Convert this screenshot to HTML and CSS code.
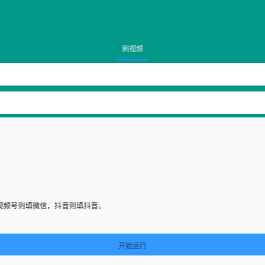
FILE: index.html
```html
<!DOCTYPE html>
<html>
  <head>
    <meta charset="utf-8">
    <meta name="viewport" content="width=device-width, initial-scale=1">
    <title>刷视频</title>
    <link rel="stylesheet" href="styles.css">
  </head>
  <body>
    <header class="topbar">
      <div class="tab active">刷视频</div>
    </header>

    <form class="fields">
      <div class="field"></div>
      <div class="rule thick"></div>
      <div class="field"></div>
      <div class="rule thin"></div>
    </form>

    <main class="content">
      <p class="hint">视频号则填微信，抖音则填抖音。</p>
      <button class="run" type="button">开始运行</button>
    </main>
  </body>
</html>
```

FILE: styles.css
```css
html, body {
  margin: 0;
  padding: 0;
  height: 100%;
}

body {
  font-family: "Noto Sans CJK SC", "Noto Sans", sans-serif;
  background: #fafafa;
  color: #333;
  overflow: hidden;
}

.topbar {
  height: 63px;
  background: #009688;
  display: flex;
  justify-content: center;
  align-items: flex-end;
}

.tab {
  width: 31px;
  font-size: 7px;
  line-height: 10px;
  text-align: center;
  color: rgba(255, 255, 255, 0.78);
  padding-bottom: 6px;
  border-bottom: 2px solid #1e8fd2;
  margin-bottom: 2px;
}

.fields {
  margin: 0;
}

.field {
  height: 22px;
  background: #fff;
}

.rule {
  background: #009688;
}

.rule.thick {
  height: 5px;
  border-top: 1px solid #8fd0c9;
  border-bottom: 1px solid #8fd0c9;
}

.rule.thin {
  height: 3px;
  border-bottom: 1px solid #9fd6d0;
}

.content {
  display: flex;
  flex-direction: column;
  padding-top: 82px;
}

.hint {
  margin: 0 0 0 -4px;
  font-size: 7.3px;
  line-height: 10px;
  color: #2a2a2a;
  white-space: nowrap;
}

.run {
  margin-top: 23px;
  height: 23px;
  border: none;
  border-top: 1px solid #a8d2ff;
  border-bottom: 1px solid #a8d2ff;
  background: #3399ff;
  font-family: inherit;
  font-size: 7px;
  color: #1c4478;
  padding: 0;
}
```
